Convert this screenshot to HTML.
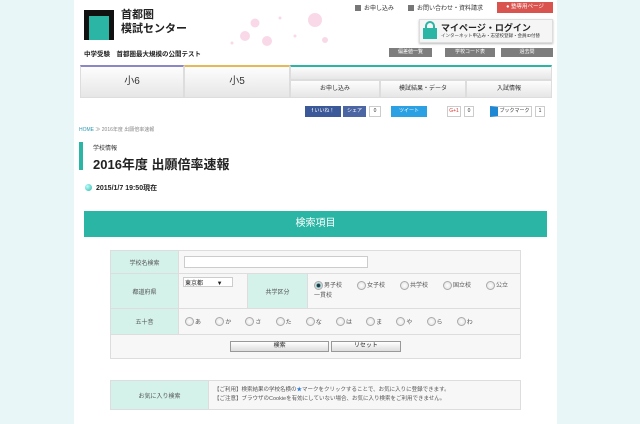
<!DOCTYPE html>
<html><head><meta charset="utf-8"><style>
*{margin:0;padding:0;box-sizing:border-box}
body{width:640px;height:424px;overflow:hidden;background:#e8f6f7;font-family:"Liberation Sans","Noto Sans CJK JP",sans-serif;color:#333;position:relative}
.a{position:absolute}
#page{left:74px;top:0;width:483px;height:424px;background:#fff}
.t{font-size:6px;white-space:nowrap}
.gb{background:#7d7d7d;color:#fff;font-size:5px;text-align:center;line-height:9px;height:9px}
.nav{background:linear-gradient(#fdfdfd,#e6e6e6);border:1px solid #ddd}
.sq{width:6px;height:6px;background:#777;display:inline-block;vertical-align:middle;margin-right:3px}
td{border:1px solid #ddd;font-size:6px;color:#555}
.lb{background:#d4f2ea;text-align:center}
.rd{display:inline-block;width:9px;height:9px;border-radius:50%;border:1px solid #aaa;background:radial-gradient(#fff,#ddd);vertical-align:middle;margin-right:1px}
.o{display:inline-block;width:43px}
.g{display:inline-block;width:30.2px}
</style></head><body>
<div class="a" id="page"></div>
<!-- logo -->
<div class="a" style="left:84px;top:10px;width:30px;height:30px;background:#111"></div>
<div class="a" style="left:89px;top:16px;width:20px;height:24px;background:#2bb5a4"></div>
<div class="a" style="left:121px;top:8px;font-size:11px;line-height:14px;font-weight:bold;color:#222">首都圏<br>模試センター</div>
<div class="a t" style="left:84px;top:48px;font-size:6.5px;color:#222;font-weight:bold">中学受験　首都圏最大規模の公開テスト</div>
<!-- blossoms -->
<svg class="a" style="left:225px;top:8px" width="110" height="45">
<g fill="#f9d9e7"><circle cx="90" cy="12" r="7"/><circle cx="30" cy="15" r="4.5"/><circle cx="20" cy="28" r="5"/><circle cx="42" cy="33" r="5"/><circle cx="100" cy="32" r="3"/><circle cx="7" cy="35" r="1.5"/><circle cx="55" cy="10" r="1.5"/><circle cx="70" cy="28" r="1.5"/></g></svg>
<!-- top links -->
<div class="a t" style="left:355px;top:3px"><span class="sq"></span>お申し込み</div>
<div class="a t" style="left:408px;top:3px"><span class="sq"></span>お問い合わせ・資料請求</div>
<div class="a" style="left:497px;top:2px;width:56px;height:11px;background:#d9544f;color:#fff;font-size:5.5px;line-height:11px;text-align:center">● 塾専用ページ</div>
<div class="a" style="left:419px;top:19px;width:134px;height:24px;background:#f5f5f5;border:1px solid #ddd;box-shadow:0 1px 2px #bbb"></div>
<div class="a" style="left:425px;top:21px;width:10px;height:10px;border:2px solid #2bb5a4;border-bottom:none;border-radius:5px 5px 0 0"></div>
<div class="a" style="left:423px;top:28px;width:14px;height:11px;background:#2bb5a4"></div>
<div class="a t" style="left:441px;top:21px;font-size:9px;font-weight:bold;color:#222">マイページ・ログイン</div>
<div class="a t" style="left:441px;top:33px;font-size:4.5px">インターネット申込み・志望校登録・会員ID付替</div>
<div class="a gb" style="left:389px;top:48px;width:43px">偏差値一覧</div>
<div class="a gb" style="left:445px;top:48px;width:50px">学校コード表</div>
<div class="a gb" style="left:501px;top:48px;width:52px">過去問</div>
<!-- nav -->
<div class="a nav" style="left:80px;top:65px;width:104px;height:33px;border-top:2px solid #8b87c4;font-size:10px;text-align:center;line-height:30px">小6</div>
<div class="a nav" style="left:184px;top:65px;width:106px;height:33px;border-top:2px solid #e3b95a;font-size:10px;text-align:center;line-height:30px">小5</div>
<div class="a nav" style="left:290px;top:65px;width:262px;height:15px;border-top:2px solid #2bb5a4"></div>
<div class="a nav t" style="left:290px;top:80px;width:90px;height:18px;text-align:center;line-height:17px">お申し込み</div>
<div class="a nav t" style="left:380px;top:80px;width:86px;height:18px;text-align:center;line-height:17px">模試結果・データ</div>
<div class="a nav t" style="left:466px;top:80px;width:86px;height:18px;text-align:center;line-height:17px">入試情報</div>
<!-- social -->
<div class="a" style="left:305px;top:106px;width:36px;height:11px;background:#3b5998;color:#fff;font-size:5px;line-height:11px;text-align:center">f いいね！</div>
<div class="a" style="left:343px;top:106px;width:23px;height:11px;background:#4c66a4;color:#fff;font-size:5px;line-height:11px;text-align:center">シェア</div>
<div class="a" style="left:369px;top:106px;width:12px;height:11px;border:1px solid #ccc;font-size:5px;line-height:9px;text-align:center">0</div>
<div class="a" style="left:391px;top:106px;width:36px;height:11px;background:#2ba0e3;color:#fff;font-size:5px;line-height:11px;text-align:center">ツイート</div>
<div class="a" style="left:447px;top:106px;width:14px;height:11px;border:1px solid #ccc;color:#d33;font-size:5px;line-height:9px;text-align:center">G+1</div>
<div class="a" style="left:464px;top:106px;width:10px;height:11px;border:1px solid #ccc;font-size:5px;line-height:9px;text-align:center">0</div>
<div class="a" style="left:490px;top:106px;width:42px;height:11px;border:1px solid #ccc;border-left:8px solid #1e88d5;font-size:5px;line-height:9px;text-align:center">ブックマーク</div>
<div class="a" style="left:535px;top:106px;width:10px;height:11px;border:1px solid #ccc;font-size:5px;line-height:9px;text-align:center">1</div>
<!-- breadcrumb/title -->
<div class="a t" style="left:79px;top:126px;font-size:5px;color:#888"><span style="color:#2b9ab5">HOME</span> ≫ 2016年度 出願倍率速報</div>
<div class="a" style="left:79px;top:142px;width:4px;height:28px;background:#2bb5a4"></div>
<div class="a t" style="left:93px;top:143px;color:#333">学校情報</div>
<div class="a t" style="left:93px;top:154px;font-size:13px;font-weight:bold;color:#222">2016年度 出願倍率速報</div>
<div class="a" style="left:85px;top:184px;width:7px;height:7px;border-radius:50%;background:radial-gradient(circle at 35% 35%,#bff,#2bb5a4)"></div>
<div class="a t" style="left:96px;top:183px;font-size:7px;font-weight:bold;color:#222">2015/1/7 19:50現在</div>
<div class="a" style="left:84px;top:211px;width:463px;height:26px;background:#2bb5a4;color:#fff;font-size:10px;text-align:center;line-height:26px">検索項目</div>
<!-- table -->
<table class="a" style="left:110px;top:250px;width:411px;border-collapse:collapse;background:#f7f7f7">
<tr style="height:23px"><td class="lb" style="width:68px">学校名検索</td><td colspan="3"><div style="margin-left:5px;width:184px;height:12px;border:1px solid #ccc;background:#fff"></div></td></tr>
<tr style="height:35px"><td class="lb">都道府県</td><td style="width:69px;vertical-align:top;padding:3px 4px"><div style="width:50px;height:10px;border:1px solid #ccc;background:#fff;font-size:6px;color:#222;padding-left:1px">東京都　　 ▼</div></td><td class="lb" style="width:60px">共学区分</td><td style="padding:3px 6px;line-height:10px;white-space:nowrap"><span class="o"><span class="rd" style="background:radial-gradient(circle,#234 30%,#6bb 40%,#ddd 60%)"></span>男子校</span><span class="o"><span class="rd"></span>女子校</span><span class="o"><span class="rd"></span>共学校</span><span class="o"><span class="rd"></span>国立校</span><span class="rd"></span>公立<br>一貫校</td></tr>
<tr style="height:26px"><td class="lb">五十音</td><td colspan="3" style="padding-left:6px;white-space:nowrap">
<span class="g"><span class="rd"></span>あ</span><span class="g"><span class="rd"></span>か</span><span class="g"><span class="rd"></span>さ</span><span class="g"><span class="rd"></span>た</span><span class="g"><span class="rd"></span>な</span><span class="g"><span class="rd"></span>は</span><span class="g"><span class="rd"></span>ま</span><span class="g"><span class="rd"></span>や</span><span class="g"><span class="rd"></span>ら</span><span class="g"><span class="rd"></span>わ</span></td></tr>
<tr style="height:24px"><td colspan="4" style="text-align:center"><span style="display:inline-block;width:99px;height:11px;border:1px solid #999;background:linear-gradient(#fff,#ddd);line-height:9px;color:#222">検索</span> <span style="display:inline-block;width:70px;height:11px;border:1px solid #999;background:linear-gradient(#fff,#ddd);line-height:9px;color:#222">リセット</span></td></tr>
</table>
<table class="a" style="left:110px;top:380px;width:411px;border-collapse:collapse;background:#f7f7f7">
<tr style="height:29px"><td class="lb" style="width:98px">お気に入り検索</td><td style="padding-left:5px;line-height:9px;font-size:5.5px">【ご利用】検索結果の学校名横の<span style="color:#2b7bd5">★</span>マークをクリックすることで、お気に入りに登録できます。<br>【ご注意】ブラウザのCookieを有効にしていない場合、お気に入り検索をご利用できません。</td></tr>
</table>
</body></html>
